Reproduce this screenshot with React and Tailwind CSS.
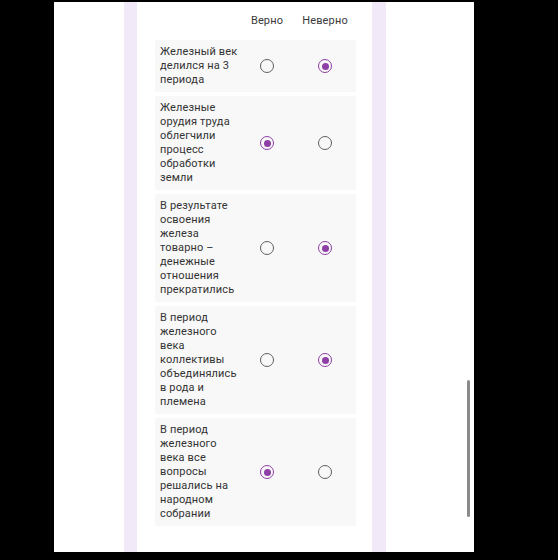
import React from "react";

const rows = [
  { text: "Железный век делился на 3 периода", answer: 1 },
  { text: "Железные орудия труда облегчили процесс обработки земли", answer: 0 },
  { text: "В результате освоения железа товарно – денежные отношения прекратились", answer: 1 },
  { text: "В период железного века коллективы объединялись в рода и племена", answer: 1 },
  { text: "В период железного века все вопросы решались на народном собрании", answer: 0 },
];

const Radio = ({ checked }) =>
  checked ? (
    <span className="flex h-[14px] w-[14px] items-center justify-center rounded-full border-[1.5px] border-[#8e3fa6]">
      <span className="h-[7px] w-[7px] rounded-full bg-[#8e3fa6]" />
    </span>
  ) : (
    <span className="h-[14px] w-[14px] rounded-full border-[1.5px] border-[#606060]" />
  );

const App = () => {
  return (
    <div
      className="h-[560px] w-[558px] bg-black pt-[2px] pl-[54px]"
      style={{ fontFamily: "Roboto, 'Noto Sans', sans-serif" }}
    >
      <div className="relative flex h-[550px] w-[420px] bg-white pl-[70px]">
        <div className="flex h-full w-[262px] bg-[#f1e9f7] pl-[13px] pr-[14px]">
          <div className="h-full w-full bg-white pt-[12px]">
            <div className="ml-[18px] grid grid-cols-[85px_54px_62px] text-[11px] leading-[14px] tracking-[0.15px] text-[#3a3a3a]">
              <span />
              <span className="text-center">Верно</span>
              <span className="text-center">Неверно</span>
            </div>
            <div className="mt-[12px] flex flex-col gap-[4px]">
              {rows.map((r, i) => (
                <div
                  key={i}
                  className="ml-[18px] grid w-[201px] grid-cols-[80px_54px_62px] items-center bg-[#f8f8f8] py-[5px] pl-[5px]"
                >
                  <span className="text-[11px] leading-[14px] tracking-[0.15px] text-[#333]">
                    {r.text}
                  </span>
                  <span className="flex justify-center">
                    <Radio checked={r.answer === 0} />
                  </span>
                  <span className="flex justify-center">
                    <Radio checked={r.answer === 1} />
                  </span>
                </div>
              ))}
            </div>
          </div>
        </div>
        <div className="absolute left-[413px] top-[378px] h-[137px] w-[3px] rounded-full bg-[#8a8a8a]" />
      </div>
    </div>
  );
};

export default App;
